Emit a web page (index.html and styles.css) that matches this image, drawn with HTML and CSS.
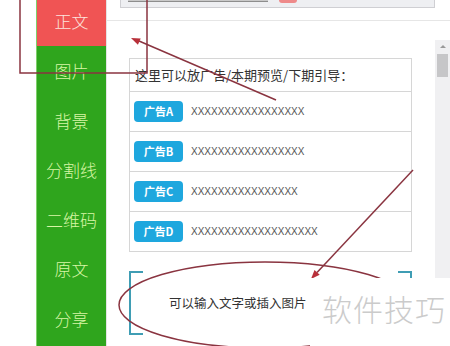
FILE: index.html
```html
<!DOCTYPE html>
<html lang="zh-CN">
<head>
    <meta charset="UTF-8">
    <meta name="viewport" content="width=device-width, initial-scale=1.0">
    <title>编辑器</title>
    <link rel="stylesheet" href="styles.css">
</head>
<body>
    <div class="page">
        <div class="gutter"></div>

        <!-- 左侧菜单 -->
        <div class="sidebar">
            <div class="nav-item active">正文</div>
            <div class="nav-item">图片</div>
            <div class="nav-item">背景</div>
            <div class="nav-item">分割线</div>
            <div class="nav-item">二维码</div>
            <div class="nav-item">原文</div>
            <div class="nav-item">分享</div>
        </div>

        <!-- 右侧编辑区 -->
        <div class="main">
            <div class="toolbar">
                <div class="toolbar-box">
                    <span class="tb-input"></span>
                    <span class="tb-red"></span>
                </div>
            </div>
            <div class="body">
                <div class="content">
                    <div class="ad-box">
                        <div class="ad-head">这里可以放广告/本期预览/下期引导：</div>
                        <div class="ad-row"><span class="badge">广告A</span><span class="ad-text">XXXXXXXXXXXXXXXXX</span></div>
                        <div class="ad-row"><span class="badge">广告B</span><span class="ad-text">XXXXXXXXXXXXXXXXX</span></div>
                        <div class="ad-row"><span class="badge">广告C</span><span class="ad-text">XXXXXXXXXXXXXXXX</span></div>
                        <div class="ad-row"><span class="badge">广告D</span><span class="ad-text">XXXXXXXXXXXXXXXXXXX</span></div>
                    </div>
                    <div class="editor">
                        <span class="bracket left"></span>
                        <span class="editor-text">可以输入文字或插入图片</span>
                        <span class="bracket right"></span>
                    </div>
                </div>
                <div class="scrollbar">
                    <span class="scroll-up"></span>
                    <span class="scroll-thumb"></span>
                </div>
            </div>
        </div>

        <!-- 标注 -->
        <svg class="marks" width="450" height="346" viewBox="0 0 450 346">
            <path d="M20 -2 V73 H147 V-2" fill="none" stroke="#8a3440" stroke-width="1.5"/>
            <line x1="276" y1="100" x2="139" y2="41" stroke="#8a3440" stroke-width="1.5"/>
            <polygon points="131,38 137.9,44.8 140.7,38.4" fill="#b8303a"/>
            <line x1="413" y1="170" x2="317" y2="272.5" stroke="#8a3440" stroke-width="1.5"/>
            <polygon points="311,279 319.7,274.8 314.5,270" fill="#b8303a"/>
            <ellipse cx="265" cy="305" rx="146" ry="43" fill="none" stroke="#8a3440" stroke-width="1.5"/>
        </svg>

        <div class="watermark">软件技巧</div>
    </div>
</body>
</html>
```

FILE: styles.css
```css
body {
    margin: 0;
    padding: 0;
    background-color: #fff;
    font-family: "Noto Sans CJK SC", "Noto Sans", sans-serif;
}
.page {
    position: relative;
    display: flex;
    width: 450px;
    height: 346px;
    overflow: hidden;
}
.gutter {
    width: 36px;
    flex-shrink: 0;
}
.sidebar {
    width: 70px;
    flex-shrink: 0;
    background-color: #2fa51d;
    border-left: 1px solid #7fcf6a;
    box-sizing: border-box;
}
.nav-item {
    height: 49.5px;
    line-height: 49.5px;
    text-align: center;
    font-size: 17px;
    font-weight: 300;
    color: #d8f6a6;
}
.nav-item.active {
    height: 46px;
    line-height: 42px;
    background-color: #f05454;
    color: #fde4de;
}
.main {
    flex: 1;
    display: flex;
    flex-direction: column;
    border-left: 1px solid #e4e4e4;
}
.toolbar {
    height: 20px;
    border-bottom: 1px solid #e6e6e6;
}
.toolbar-box {
    display: flex;
    align-items: flex-start;
    gap: 11px;
    height: 7px;
    margin: 0 15px 0 13px;
    padding-left: 7px;
    border: 1px solid #cfcfd3;
    border-top: none;
    background-color: #eeeff2;
}
.tb-input {
    width: 140px;
    height: 1px;
    background-color: #c9c9c9;
    border-bottom: 1px solid #8d8d8d;
}
.tb-red {
    width: 18px;
    height: 3px;
    background-color: #ee8a8a;
    border-radius: 0 0 9px 9px;
}
.body {
    flex: 1;
    display: flex;
}
.content {
    flex: 1;
    padding: 37px 23px 0 22px;
}
.ad-box {
    border: 1px solid #d6d6d6;
}
.ad-head {
    height: 32px;
    line-height: 32px;
    padding-left: 5px;
    font-size: 13px;
    color: #333;
    border-bottom: 1px solid #d6d6d6;
}
.ad-row {
    display: flex;
    align-items: center;
    height: 39px;
    padding-left: 4px;
    border-bottom: 1px solid #d6d6d6;
}
.ad-row:last-child {
    border-bottom: none;
}
.badge {
    width: 49px;
    height: 21px;
    line-height: 21px;
    border-radius: 4px;
    background-color: #1ea7de;
    color: #fff;
    font-size: 11px;
    font-weight: bold;
    text-align: center;
}
.ad-text {
    margin-left: 8px;
    font-family: "Liberation Sans", Arial, sans-serif;
    font-size: 10px;
    color: #555;
}
.editor {
    display: flex;
    align-items: center;
    height: 62px;
    margin-top: 19px;
}
.bracket {
    width: 12px;
    height: 60px;
    border: 2px solid #3f9db4;
    align-self: flex-start;
}
.bracket.left {
    border-right: none;
}
.bracket.right {
    border-left: none;
}
.editor-text {
    flex: 1;
    padding-left: 26px;
    font-size: 12.5px;
    color: #333;
}
.scrollbar {
    position: relative;
    width: 15px;
    margin-top: 19px;
    background-color: #f0f0f2;
}
.scroll-up {
    display: block;
    width: 0;
    height: 0;
    margin: 5px auto 0;
    border-left: 3px solid transparent;
    border-right: 3px solid transparent;
    border-bottom: 3px solid #999;
}
.scroll-thumb {
    display: block;
    width: 11px;
    height: 23px;
    margin: 6px auto 0;
    background-color: #c6c6c8;
}
.marks {
    position: absolute;
    top: 0;
    left: 0;
    pointer-events: none;
}
.watermark {
    position: absolute;
    left: 310px;
    top: 278px;
    right: 0;
    bottom: 0;
    padding: 12px 0 0 12px;
    background-color: #fff;
    font-size: 30px;
    font-weight: 300;
    line-height: 36px;
    letter-spacing: 1px;
    color: #cbcbcb;
}
```
